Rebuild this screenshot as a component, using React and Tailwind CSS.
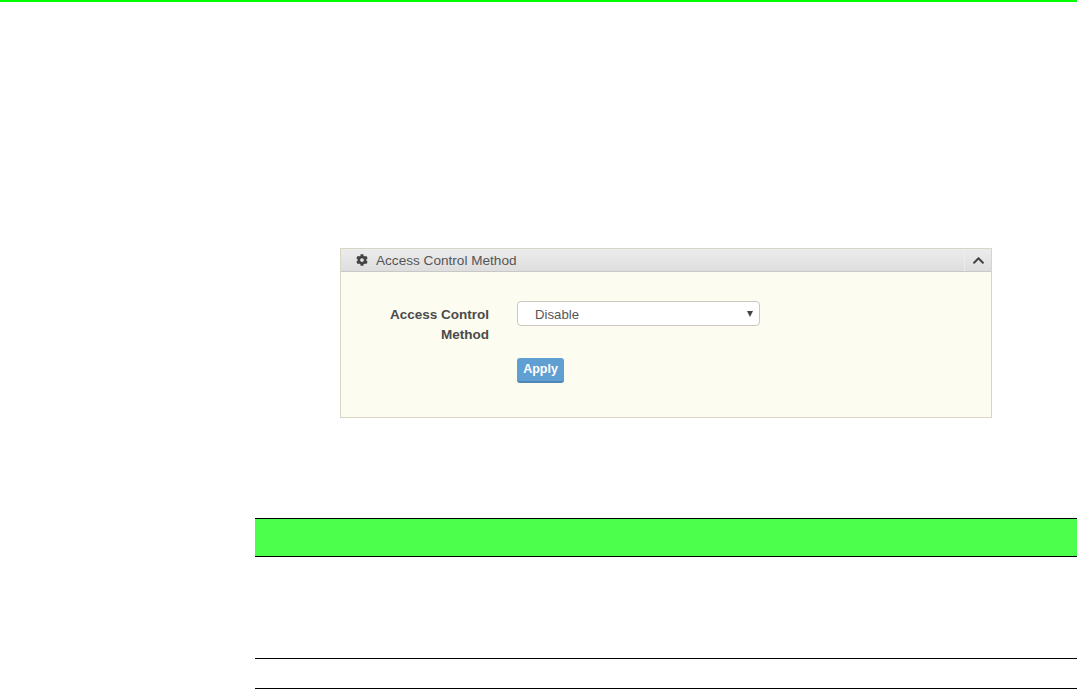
import React from "react";
import { FaCog, FaChevronUp } from "react-icons/fa";

export default function App() {
  return (
    <div className="w-[1077px] h-[689px] overflow-hidden bg-white font-['Liberation_Sans',Arial,sans-serif]">
      <div className="h-[2px] bg-[#00ff00]" />
      <div className="ml-[340px] mt-[246px] w-[652px] h-[170px] border border-[#d8d5c5] bg-[#fdfcf1] flex flex-col">
        <div className="h-[23px] shrink-0 flex items-center border-b border-[#c8c8c8] bg-gradient-to-b from-[#ececec] to-[#dedede]">
          <FaCog className="ml-[15px] w-[12px] h-[12px] text-[#444]" />
          <span className="ml-[8px] pt-[2px] text-[13.6px] text-[#555] leading-none">Access Control Method</span>
          <div className="ml-auto w-[27px] h-full flex items-center justify-center border-l border-[#ececec]">
            <FaChevronUp className="w-[13px] h-[13px] text-[#444]" />
          </div>
        </div>
        <div className="flex flex-col pt-[29px]">
          <div className="flex">
            <div className="w-[148px] shrink-0 text-right text-[13.5px] leading-[20px] font-bold text-[#4a4a4a] pt-[4px]">
              <div>Access Control</div>
              <div>Method</div>
            </div>
            <div className="ml-[28px] w-[243px] h-[25px] rounded-[4px] border border-[#ccc8bd] bg-white flex items-center justify-between pl-[17px] pr-[6px]">
              <span className="pt-[2px] text-[13.2px] text-[#555] leading-none">Disable</span>
              <span className="w-0 h-0 border-l-[3px] border-r-[3px] border-t-[6px] border-l-transparent border-r-transparent border-t-[#444]" />
            </div>
          </div>
          <button className="ml-[176px] mt-[13px] w-[47px] h-[25px] rounded-[3px] bg-[#5f9fd2] border-b-2 border-[#4f88b8] text-white text-[12.5px] font-bold leading-none pb-[1px]">
            Apply
          </button>
        </div>
      </div>
      <div className="ml-[255px] mt-[100px]">
        <div className="h-[39px] border-y border-black bg-[#4dff4d]" />
        <div className="h-[102px] border-b border-black" />
        <div className="h-[30px] border-b border-black" />
      </div>
    </div>
  );
}
